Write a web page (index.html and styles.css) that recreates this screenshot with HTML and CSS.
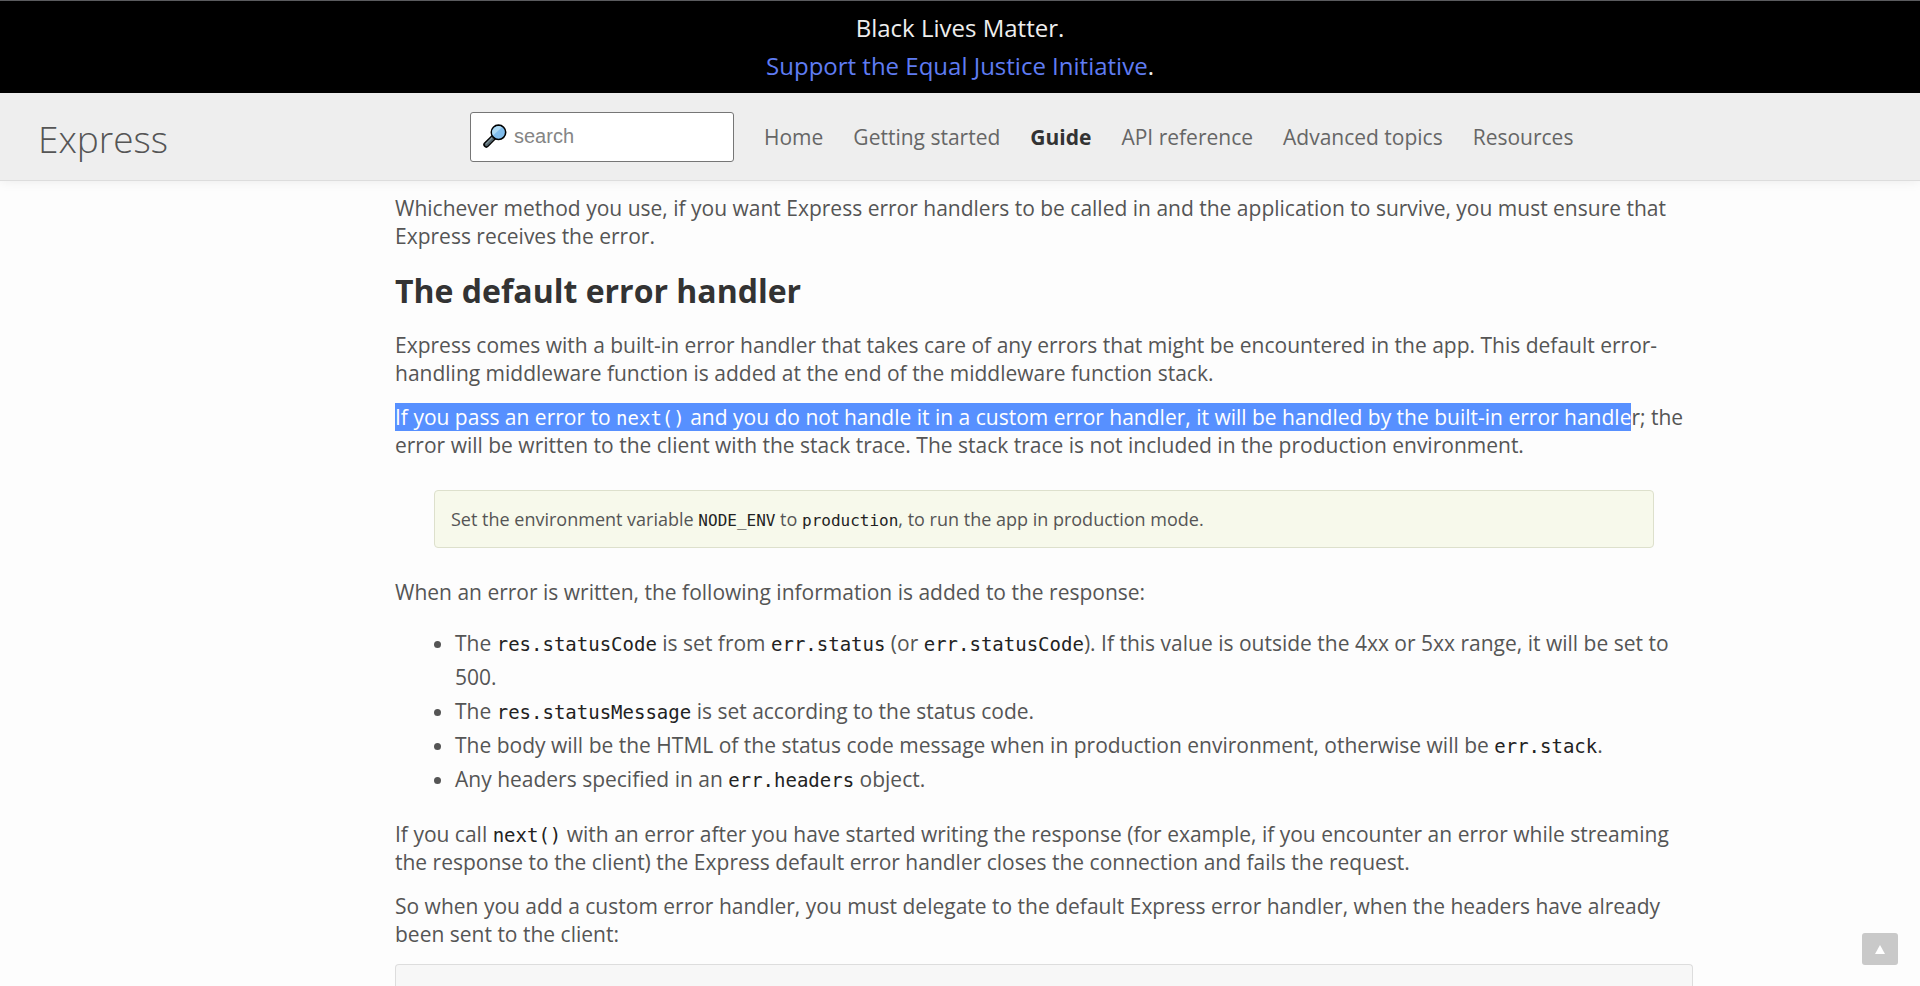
FILE: index.html
```
<!DOCTYPE html>
<html lang="en">
<head>
<meta charset="utf-8">
<title>Express error handling</title>
<link rel="stylesheet" href="styles.css">
</head>
<body>
<aside class="banner">
  <div>Black Lives Matter.</div>
  <div><a href="#">Support the Equal Justice Initiative</a>.</div>
</aside>
<header class="header">
  <a class="logo" href="#">Express</a>
  <form class="search">
    <svg class="search-icon" viewBox="0 0 24 24" aria-hidden="true">
      <path d="M3.300 20.700 11.500 12.500" stroke="#000" stroke-width="6" stroke-linecap="round"/>
      <path d="M3.500 20.500 10.500 13.500" stroke="#52636b" stroke-width="3.400" stroke-linecap="round"/>
      <path d="M3.200 19.800 9 14" stroke="#82939a" stroke-width="1.200" stroke-linecap="round"/>
      <circle cx="15.500" cy="8.300" r="7.200" fill="#81bdec" stroke="#000" stroke-width="1.600"/>
      <path d="M10 11.500A6.300 6.300 0 0 1 19 3.200Z" fill="#add9f3"/>
    </svg>
    <input type="text" placeholder="search" aria-label="search">
  </form>
  <nav class="nav">
    <a href="#">Home</a>
    <a href="#">Getting started</a>
    <a class="active" href="#">Guide</a>
    <a href="#">API reference</a>
    <a href="#">Advanced topics</a>
    <a href="#">Resources</a>
  </nav>
</header>
<main class="page">
  <article class="content">
    <p>Whichever method you use, if you want Express error handlers to be called in and the application to survive, you must ensure that Express receives the error.</p>
    <h2>The default error handler</h2>
    <p>Express comes with a built-in error handler that takes care of any errors that might be encountered in the app. This default error-handling middleware function is added at the end of the middleware function stack.</p>
    <p><span class="selected">If you pass an error to <code>next()</code> and you do not handle it in a custom error handler, it will be handled by the built-in error handle</span>r; the error will be written to the client with the stack trace. The stack trace is not included in the production environment.</p>
    <div class="note">Set the environment variable <code>NODE_ENV</code> to <code>production</code>, to run the app in production mode.</div>
    <p>When an error is written, the following information is added to the response:</p>
    <ul>
      <li>The <code>res.statusCode</code> is set from <code>err.status</code> (or <code>err.statusCode</code>). If this value is outside the 4xx or 5xx range, it will be set to 500.</li>
      <li>The <code>res.statusMessage</code> is set according to the status code.</li>
      <li>The body will be the HTML of the status code message when in production environment, otherwise will be <code>err.stack</code>.</li>
      <li>Any headers specified in an <code>err.headers</code> object.</li>
    </ul>
    <p>If you call <code>next()</code> with an error after you have started writing the response (for example, if you encounter an error while streaming the response to the client) the Express default error handler closes the connection and fails the request.</p>
    <p>So when you add a custom error handler, you must delegate to the default Express error handler, when the headers have already been sent to the client:</p>
    <pre class="code-block"></pre>
  </article>
</main>
<button class="to-top" type="button" aria-label="Back to top">
  <svg viewBox="0 0 10 9" aria-hidden="true"><path d="M5 0 10 9H0Z" fill="#fff"/></svg>
</button>
</body>
</html>
```
FILE: styles.css
```
* {
  box-sizing: border-box;
}

body {
  display: flex;
  flex-direction: column;
  min-height: 100vh;
  margin: 0;
  background: #fdfdfd;
  color: #555;
  font-family: "Open Sans", sans-serif;
  font-size: 21px;
  line-height: 28px;
}

a {
  text-decoration: none;
}

.banner {
  padding: 8px 0;
  border-top: 1px solid #5a5b5e;
  background: #000;
  color: #eee;
  font-size: 24px;
  line-height: 38px;
  text-align: center;
}

.banner a {
  color: #5f7cf3;
}

.header {
  display: flex;
  align-items: center;
  height: 88px;
  padding-left: 38px;
  border-bottom: 1px solid #ddd;
  background: #eee;
  box-shadow: 0 0 12px rgba(0, 0, 0, 0.08);
}

.logo {
  width: 432px;
  padding-top: 5px;
  color: #555;
  font-size: 37px;
  font-weight: 300;
  line-height: 48px;
}

.search {
  position: relative;
  width: 264px;
  margin-right: 30px;
}

.search-icon {
  position: absolute;
  top: 12px;
  left: 13px;
  width: 24px;
  height: 24px;
  fill: none;
}

.search input {
  display: block;
  width: 100%;
  height: 50px;
  padding: 0 12px 0 43px;
  border: 1px solid #767676;
  border-radius: 3px;
  background: #fff;
  font-family: "Liberation Sans", sans-serif;
  font-size: 20px;
}

.search input::placeholder {
  color: #858585;
}

.nav {
  display: flex;
  gap: 30px;
}

.nav a {
  color: #666;
  white-space: nowrap;
}

.nav .active {
  color: #333;
  font-weight: 700;
}

.page {
  display: grid;
  flex: 1;
  grid-template-columns: minmax(0, 1298px);
  padding: 13px 40px 0 395px;
}

.content {
  display: flex;
  flex-direction: column;
}

.content p {
  margin: 0 0 16px;
}

.content h2 {
  margin: 4px 0 19px;
  color: #333;
  font-size: 32px;
  line-height: 42px;
}

code {
  color: #222;
  font-family: "DejaVu Sans Mono", monospace;
  font-size: 19px;
  line-height: 24px;
}

.selected,
.selected code {
  background: #5790ff;
  color: #fff;
}

.note {
  margin: 15px 39px 30px;
  padding: 14px 16px;
  border: 1px solid #dde0cc;
  border-radius: 4px;
  background: #f7f9eb;
  font-size: 18px;
}

.note code {
  font-size: 16px;
}

.content ul {
  margin: 4px 0 24px;
  padding-left: 60px;
  line-height: 34px;
}

.code-block {
  flex: 1;
  margin: 0;
  border: 1px solid #ddd;
  border-bottom: 0;
  border-radius: 4px 4px 0 0;
  background: #f7f7f7;
}

.to-top {
  position: fixed;
  right: 22px;
  bottom: 21px;
  display: flex;
  align-items: center;
  justify-content: center;
  width: 36px;
  height: 32px;
  padding: 0;
  border: 0;
  border-radius: 3px;
  background: #c9c9c9;
}

.to-top svg {
  width: 10px;
  height: 9px;
}
```
